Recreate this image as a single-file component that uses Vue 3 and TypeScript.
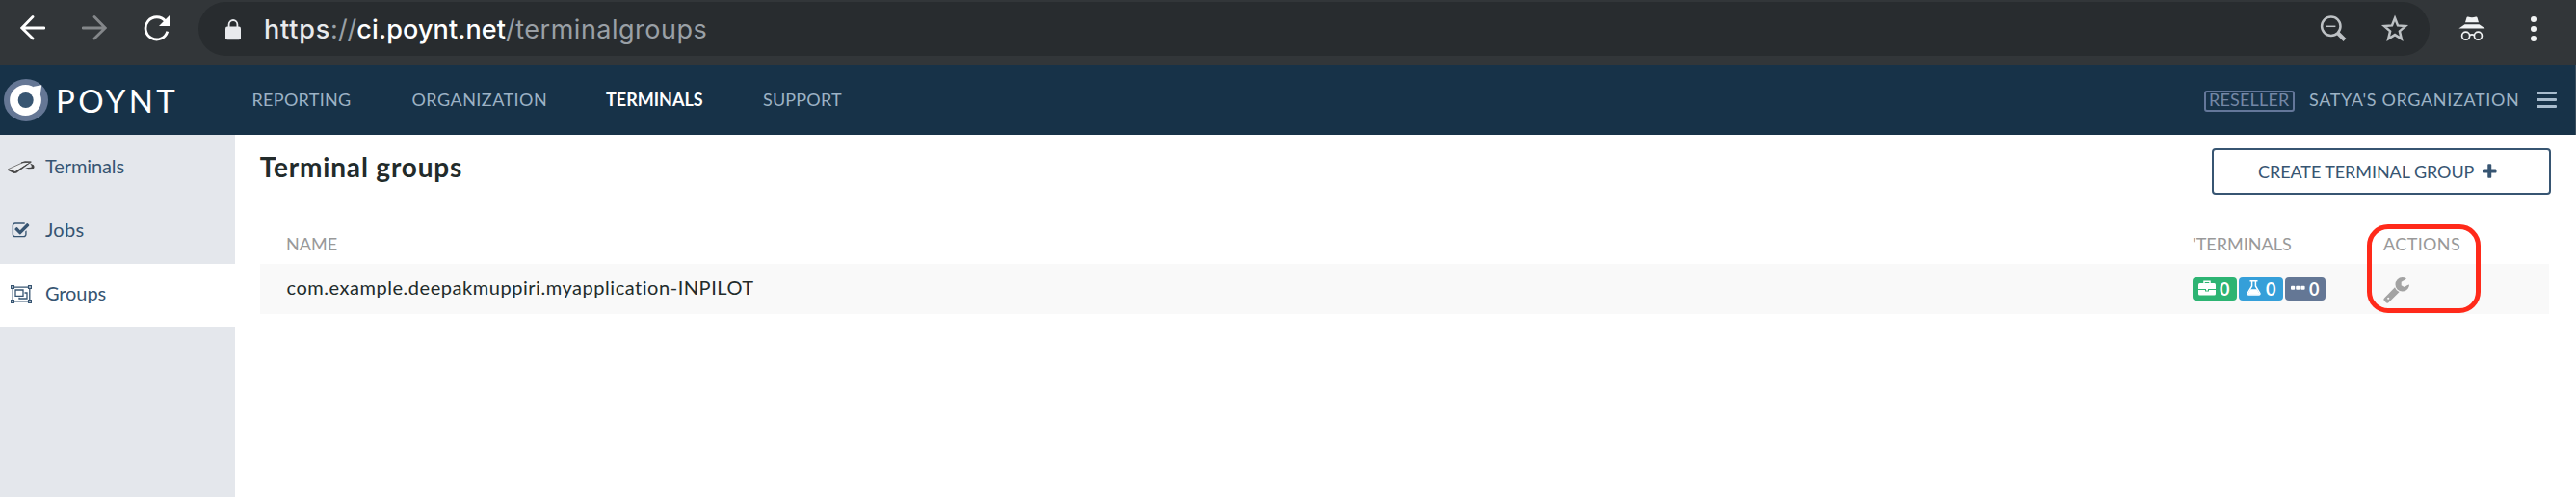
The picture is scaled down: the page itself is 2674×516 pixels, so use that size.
<script setup lang="ts">
interface NavItem { label: string; kind: string; active?: boolean }
interface Badge { kind: 'briefcase' | 'flask' | 'dots'; count: number }
interface Group { name: string; badges: Badge[] }

const nav: NavItem[] = [
  { label: 'REPORTING', kind: 'reporting' },
  { label: 'ORGANIZATION', kind: 'organization' },
  { label: 'TERMINALS', kind: 'terminals', active: true },
  { label: 'SUPPORT', kind: 'support' },
]
const side: NavItem[] = [
  { label: 'Terminals', kind: 'terminal' },
  { label: 'Jobs', kind: 'jobs' },
  { label: 'Groups', kind: 'groups', active: true },
]
const groups: Group[] = [
  {
    name: 'com.example.deepakmuppiri.myapplication-INPILOT',
    badges: [
      { kind: 'briefcase', count: 0 },
      { kind: 'flask', count: 0 },
      { kind: 'dots', count: 0 },
    ],
  },
]
</script>

<template>
  <div class="page">
    <div class="chrome">
      <div class="controls">
        <svg class="arrow" viewBox="0 0 26 26"><path d="M25 13H2M13 1.5L1.8 13L13 24" /></svg>
        <svg class="arrow forward" viewBox="0 0 26 26"><path d="M1 13H24M13 1.5L24.2 13L13 24" /></svg>
        <svg class="reload" viewBox="0 0 28 28">
          <path class="ring" d="M22.8 7.2A11.6 11.6 0 1 0 24.8 17.6" />
          <path class="tip" d="M27 1V12H16Z" />
        </svg>
      </div>
      <div class="omnibox">
        <svg class="lock" viewBox="0 0 16 22">
          <path d="M3.6 8V5.4a4.4 4.4 0 0 1 8.8 0V8" />
          <rect x="0" y="7.4" width="16" height="13.8" rx="2" />
        </svg>
        <div class="url"><span class="scheme">https</span><span class="dim">://</span><span class="host">ci.poynt.net</span><span class="dim path">/terminalgroups</span></div>
        <svg class="magnifier" viewBox="0 0 28 28">
          <circle cx="11.8" cy="11.3" r="9.7" />
          <path class="minus" d="M7 11.3H16.4" />
          <path class="handle" d="M18.5 18L26 25.5" />
        </svg>
        <svg class="star" viewBox="0 0 30 30">
          <path d="M15 3.8L18 11.4L26 12.1L19.9 17.4L21.8 25.4L15 21.1L8.2 25.4L10.1 17.4L4 12.1L12 11.4Z" />
        </svg>
      </div>
      <svg class="incognito" viewBox="0 0 28 26">
        <path d="M8.6 1Q9 .2 10 .6Q14 2 18 .6Q19 .2 19.4 1L21 6.2H7Z" />
        <path d="M6.5 8.2H21.5L27.6 12.6H.4Z" />
        <circle cx="7.6" cy="20.2" r="4" />
        <circle cx="20.4" cy="20.2" r="4" />
        <path class="bridge" d="M11.6 19.6Q14 18.2 16.4 19.6" />
      </svg>
      <div class="kebab"><i /><i /><i /></div>
    </div>

    <header class="topbar">
      <div class="brand">
        <svg viewBox="0 0 46 44">
          <ellipse cx="23" cy="22" rx="23" ry="22" fill="#657795" />
          <path d="M30 8L39.2 6.2L37.8 17Z" fill="#fff" />
          <ellipse cx="22.5" cy="22" rx="16.4" ry="16" fill="#fff" />
          <circle cx="22.7" cy="22" r="8" fill="#375572" />
        </svg>
        <span>POYNT</span>
      </div>
      <nav class="nav">
        <a v-for="item in nav" :key="item.kind" :class="[item.kind, { active: item.active }]">{{ item.label }}</a>
      </nav>
      <div class="account">
        <span class="role">RESELLER</span>
        <span class="org">SATYA'S ORGANIZATION</span>
        <div class="menu"><i /><i /><i /></div>
      </div>
    </header>

    <div class="body">
      <aside class="sidebar">
        <a v-for="item in side" :key="item.kind" :class="[item.kind, { active: item.active }]">
          <span class="icon">
            <svg v-if="item.kind === 'terminal'" class="device" viewBox="0 0 28 14">
              <path d="M.6 8.6L15.5 1.8L24 1.2L8 11.8Z" fill="#eceef0" stroke="#777" stroke-width="1" />
              <path d="M.3 8.5L7.8 11L20 3.2L24.5 1.2L9 12.7L6.5 13L.3 10Z" fill="#4a4a4a" />
              <path d="M14 2L18 .8L24.5 1.2" fill="none" stroke="#444" stroke-width="1.3" />
              <path d="M22.6 2.2L26.8 4.2Q28.3 6.2 26.8 8L21.5 8.2L18 7.3L24.3 6.8Q25.8 5 22.6 2.2Z" fill="#444" />
            </svg>
            <svg v-else-if="item.kind === 'jobs'" class="check" viewBox="0 0 1792 1792">
              <path d="M1472 930v318q0 119-84.5 203.5t-203.5 84.5h-832q-119 0-203.5-84.5t-84.5-203.5v-832q0-119 84.5-203.5t203.5-84.5h832q63 0 117 25 15 7 18 23 3 17-9 29l-49 49q-10 10-23 10-3 0-9-2-23-6-45-6h-832q-66 0-113 47t-47 113v832q0 66 47 113t113 47h832q66 0 113-47t47-113v-254q0-13 9-22l64-64q10-10 23-10 6 0 12 3 20 8 20 29zm231-489l-814 814q-24 24-57 24t-57-24l-430-430q-24-24-24-57t24-57l110-110q24-24 57-24t57 24l263 263 647-647q24-24 57-24t57 24l110 110q24 24 24 57t-24 57z" />
            </svg>
            <svg v-else class="group" viewBox="0 0 22 19">
              <path d="M2.2 2.2H19.8V16.8H2.2Z M5 5H13V11.4H5Z M14.5 8H17V14H9V12.8" />
              <path class="corner" d="M.6.6H3.4V3.4H.6Z M18.6.6H21.4V3.4H18.6Z M.6 15.6H3.4V18.4H.6Z M18.6 15.6H21.4V18.4H18.6Z" />
            </svg>
          </span>
          <span class="label">{{ item.label }}</span>
        </a>
      </aside>

      <main class="content">
        <div class="heading">
          <h1>Terminal groups</h1>
          <button type="button">
            <span>CREATE TERMINAL GROUP</span>
            <svg viewBox="0 0 1792 1792">
              <path d="M1600 736v192q0 40-28 68t-68 28h-416v416q0 40-28 68t-68 28h-192q-40 0-68-28t-28-68v-416h-416q-40 0-68-28t-28-68v-192q0-40 28-68t68-28h416v-416q0-40 28-68t68-28h192q40 0 68 28t28 68v416h416q40 0 68 28t28 68z" />
            </svg>
          </button>
        </div>
        <div class="table">
          <div class="row head">
            <span>NAME</span><span>'TERMINALS</span><span class="actions">ACTIONS</span>
          </div>
          <div v-for="g in groups" :key="g.name" class="row item">
            <span class="name">{{ g.name }}</span>
            <span class="badges">
              <span v-for="b in g.badges" :key="b.kind" class="badge" :class="b.kind">
                <svg v-if="b.kind === 'briefcase'" viewBox="0 0 18 16">
                  <path d="M6 3V1.2H12V3" fill="none" stroke="#fff" stroke-width="1.5" />
                  <path d="M1.5 3H16.5Q18 3 18 4.5V9H0V4.5Q0 3 1.5 3Z" />
                  <path d="M0 10H7V11.6H11V10H18V14Q18 15.5 16.5 15.5H1.5Q0 15.5 0 14Z" />
                  <rect x="8" y="9" width="2" height="1.6" />
                </svg>
                <svg v-else-if="b.kind === 'flask'" viewBox="0 0 15 16">
                  <path d="M3.5 .8H11.5M5.6 1V6L1.2 13.2Q.6 15 2.4 15H12.6Q14.4 15 13.8 13.2L9.4 6V1" fill="none" stroke="#fff" stroke-width="1.5" />
                  <path d="M4.3 9.2H10.7L14 14.8H1Z" />
                </svg>
                <svg v-else viewBox="0 0 15 16">
                  <rect x="0" y="5.8" width="4.2" height="4" rx="1" />
                  <rect x="5.2" y="5.8" width="4.2" height="4" rx="1" />
                  <rect x="10.4" y="5.8" width="4.2" height="4" rx="1" />
                </svg>
                <b>{{ b.count }}</b>
              </span>
            </span>
            <svg class="wrench" viewBox="0 0 1792 1792">
              <path d="M448 1472q0-26-19-45t-45-19-45 19-19 45 19 45 45 19 45-19 19-45zm644-420l-682 682q-37 37-90 37-52 0-91-37l-106-108q-38-36-38-90 0-53 38-91l681-681q39 98 114.5 173.5t173.5 114.5zm634-435q0 39-23 106-47 134-164.5 217.5t-258.5 83.5q-185 0-316.5-131.5t-131.5-316.5 131.5-316.5 316.5-131.5q58 0 121.5 16.5t107.5 46.5q16 11 16 28t-16 28l-293 169v224l193 107q5-3 79-48.5t135.5-81 70.5-35.5q15 0 23.5 10t8.5 25z" />
            </svg>
          </div>
          <div class="highlight" />
        </div>
      </main>
    </div>
  </div>
</template>

<style>
body { margin: 0; background: #fff; }
</style>

<style scoped>
* { box-sizing: border-box; }
svg { display: block; flex: none; }
.page { width: 2674px; height: 516px; overflow: hidden; display: flex; flex-direction: column; font-family: Lato, "Open Sans", sans-serif; background: #fff; }

.chrome { height: 68px; flex: none; display: flex; padding-top: 2px; background: #323639; border-bottom: 1px solid #25282a; }
.controls { width: 206px; flex: none; display: flex; padding: 14px 0 0 21px; }
.arrow { width: 26px; height: 26px; margin-right: 38px; fill: none; stroke: #fff; stroke-width: 2.8; stroke-linecap: round; }
.forward { stroke: #84878a; }
.reload { width: 28px; height: 28px; margin-top: -1px; }
.reload .ring { fill: none; stroke: #fff; stroke-width: 2.8; }
.reload .tip { fill: #fff; }
.omnibox { width: 2316px; height: 56px; border-radius: 28px; background: #282c2f; display: flex; flex: none; }
.lock { width: 16px; height: 22px; margin: 18px 24px 0 28px; fill: #e8eaed; }
.lock path { fill: none; stroke: #e8eaed; stroke-width: 1.8; }
.url { flex: 1; line-height: 57px; font-family: Inter, Roboto, sans-serif; font-size: 27px; white-space: pre; color: #fff; }
.scheme { font-weight: 500; letter-spacing: .8px; color: #e8eaed; }
.host { font-weight: 500; letter-spacing: .1px; }
.dim { color: #9aa0a6; }
.path { letter-spacing: .5px; }
.magnifier { width: 28px; height: 28px; margin: 14px 35px 0 0; fill: none; stroke: #bdc1c4; stroke-width: 2.5; }
.magnifier .minus { stroke-width: 1.5; }
.magnifier .handle { stroke-width: 4; }
.star { width: 30px; height: 30px; margin: 13px 21px 0 0; fill: none; stroke: #bdc1c4; stroke-width: 2.5; }
.incognito { width: 28px; height: 26px; margin: 15px 0 0 30px; fill: #f1f3f4; }
.incognito circle, .incognito .bridge { fill: none; stroke: #f1f3f4; stroke-width: 1.7; }
.kebab { display: flex; flex-direction: column; gap: 4px; margin: 15px 0 0 47px; }
.kebab i { width: 6px; height: 6px; border-radius: 50%; background: #f1f3f4; }

.topbar { height: 72px; flex: none; display: flex; background: #173248; border-right: 1px solid #3b4f5f; font-size: 18px; line-height: 18px; color: #9db2c5; }
.brand { width: 261.5px; flex: none; display: flex; padding: 14px 0 0 4px; color: #fff; }
.brand svg { width: 46px; height: 44px; }
.brand span { font-size: 33px; line-height: 34px; letter-spacing: 3.4px; margin: 5px 0 0 8px; }
.nav { display: grid; grid-template-columns: 166px 201.5px 163px 100px; padding-top: 26px; flex: 1; }
.reporting { letter-spacing: .3px; }
.organization { letter-spacing: .46px; }
.support { letter-spacing: .18px; }
.nav .active { color: #fff; font-weight: 700; }
.account { display: flex; }
.role { width: 94px; height: 22px; margin: 26px 15px 0 0; border: 2px solid #64779a; border-radius: 3px; color: #7487a6; line-height: 14px; padding-left: 3px; letter-spacing: .18px; }
.org { width: 235px; margin-top: 26px; letter-spacing: .65px; white-space: nowrap; }
.menu { margin: 27px 19px 0 1px; display: flex; flex-direction: column; gap: 4px; }
.menu i { width: 21px; height: 3px; background: #a9bccd; border-radius: 1px; }

.body { flex: 1; display: flex; }
.sidebar { width: 244px; flex: none; background: #e4e7ec; padding-top: 2px; color: #375572; }
.sidebar a { height: 66px; display: flex; align-items: center; font-size: 20px; line-height: 20px; }
.sidebar .active { background: #fff; }
.icon { width: 47px; flex: none; }
.label { margin-bottom: 6px; letter-spacing: -.1px; }
.jobs .label { letter-spacing: .25px; }
.device { width: 28px; height: 14px; margin: -3px 0 0 8px; }
.check { width: 19px; height: 19px; margin: -3px 0 0 12px; fill: #375572; }
.group { width: 22px; height: 19px; margin: -3px 0 0 11px; fill: none; stroke: #375572; stroke-width: 1.3; }
.group .corner { fill: #fff; }

.content { flex: 1; padding: 14px 26px 0 26px; }
.heading { display: flex; justify-content: space-between; height: 76px; }
h1 { margin: 4px 0 0 -.3px; font-size: 28px; line-height: 30px; font-weight: 700; letter-spacing: .83px; color: #222b2b; }
button { width: 352px; height: 48px; display: flex; align-items: flex-start; padding: 12px 0 0 46px; gap: 7px; border: 2px solid #375572; border-radius: 4px; background: #fff; color: #375572; font: 18px/20px Lato, sans-serif; letter-spacing: -.07px; white-space: nowrap; }
button svg { width: 18.5px; height: 18.5px; margin-top: .5px; fill: #375572; }
.table { position: relative; width: 2376px; }
.row { display: grid; grid-template-columns: 1979px 197px 1fr; padding-left: 27px; }
.head { height: 44px; padding-top: 14px; font-size: 18px; line-height: 18px; color: #999; }
.actions { letter-spacing: .38px; padding-left: 1px; }
.item { height: 52px; background: #f9f9f9; color: #222b2b; }
.name { font-size: 20px; line-height: 20px; letter-spacing: .54px; margin: 14px 0 0 .5px; }
.badges { display: flex; gap: 2px; padding-top: 14px; }
.badge { width: 46px; height: 24px; display: flex; gap: 4px; padding: 3px 0 0 6px; border-radius: 4px; background: #2db473; color: #fff; }
.badge svg { width: 18px; height: 16px; fill: #fff; }
.badge b { font-size: 18px; line-height: 18px; }
.flask { background: #359fd9; padding-left: 8px; gap: 5px; }
.dots { width: 42px; background: #647795; padding-left: 6px; }
.flask svg, .dots svg { width: 15px; }
.wrench { width: 29px; height: 29px; margin: 12px 0 0 0; fill: #a3a3a3; }
/* callout ring drawn over the ACTIONS column */
.highlight { position: absolute; left: 2186.5px; top: 3px; width: 118.5px; height: 91.5px; border: 5px solid #ff2a1a; border-radius: 22px; }
</style>
